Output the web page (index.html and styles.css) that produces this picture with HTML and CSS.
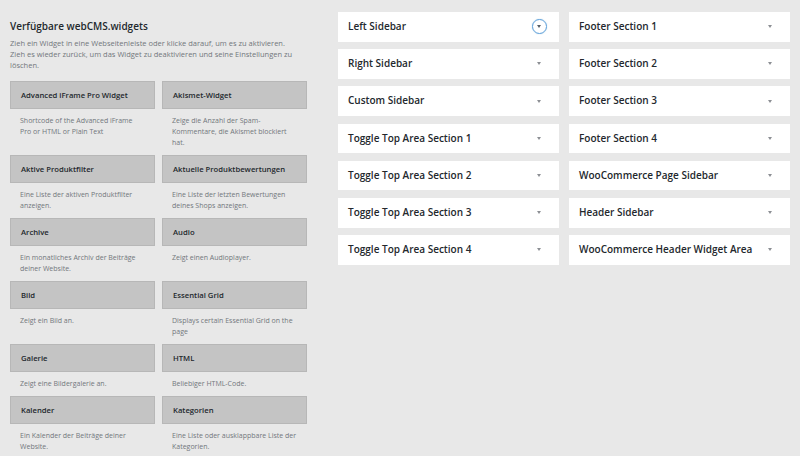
FILE: index.html
```html
<!DOCTYPE html>
<html lang="de">
<head>
    <meta charset="UTF-8">
    <meta name="viewport" content="width=device-width, initial-scale=1.0">
    <title>Widgets</title>
    <link rel="stylesheet" href="styles.css">
</head>
<body>

<div class="page">

    <div class="available">
        <h2 class="available-title">Verfügbare webCMS.widgets</h2>
        <p class="available-desc">Zieh ein Widget in eine Webseitenleiste oder klicke darauf, um es zu aktivieren.<br>Zieh es wieder zurück, um das Widget zu deaktivieren und seine Einstellungen zu löschen.</p>

        <div class="widget-list">
            <div class="widget">
                <div class="widget-top">Advanced iFrame Pro Widget</div>
                <p class="widget-desc">Shortcode of the Advanced iFrame Pro or HTML or Plain Text</p>
            </div>
            <div class="widget">
                <div class="widget-top">Akismet-Widget</div>
                <p class="widget-desc">Zeige die Anzahl der Spam-Kommentare, die Akismet blockiert hat.</p>
            </div>
            <div class="widget">
                <div class="widget-top">Aktive Produktfilter</div>
                <p class="widget-desc">Eine Liste der aktiven Produktfilter anzeigen.</p>
            </div>
            <div class="widget">
                <div class="widget-top">Aktuelle Produktbewertungen</div>
                <p class="widget-desc">Eine Liste der letzten Bewertungen deines Shops anzeigen.</p>
            </div>
            <div class="widget">
                <div class="widget-top">Archive</div>
                <p class="widget-desc">Ein monatliches Archiv der Beiträge deiner Website.</p>
            </div>
            <div class="widget">
                <div class="widget-top">Audio</div>
                <p class="widget-desc">Zeigt einen Audioplayer.</p>
            </div>
            <div class="widget">
                <div class="widget-top">Bild</div>
                <p class="widget-desc">Zeigt ein Bild an.</p>
            </div>
            <div class="widget">
                <div class="widget-top">Essential Grid</div>
                <p class="widget-desc">Displays certain Essential Grid on the page</p>
            </div>
            <div class="widget">
                <div class="widget-top">Galerie</div>
                <p class="widget-desc">Zeigt eine Bildergalerie an.</p>
            </div>
            <div class="widget">
                <div class="widget-top">HTML</div>
                <p class="widget-desc">Beliebiger HTML-Code.</p>
            </div>
            <div class="widget">
                <div class="widget-top">Kalender</div>
                <p class="widget-desc">Ein Kalender der Beiträge deiner Website.</p>
            </div>
            <div class="widget">
                <div class="widget-top">Kategorien</div>
                <p class="widget-desc">Eine Liste oder ausklappbare Liste der Kategorien.</p>
            </div>
        </div>
    </div>

    <div class="sidebars">
        <div class="sidebar-col">
            <div class="sidebar">Left Sidebar <span class="toggle focused"></span></div>
            <div class="sidebar">Right Sidebar <span class="toggle"></span></div>
            <div class="sidebar">Custom Sidebar <span class="toggle"></span></div>
            <div class="sidebar">Toggle Top Area Section 1 <span class="toggle"></span></div>
            <div class="sidebar">Toggle Top Area Section 2 <span class="toggle"></span></div>
            <div class="sidebar">Toggle Top Area Section 3 <span class="toggle"></span></div>
            <div class="sidebar">Toggle Top Area Section 4 <span class="toggle"></span></div>
        </div>
        <div class="sidebar-col">
            <div class="sidebar">Footer Section 1 <span class="toggle"></span></div>
            <div class="sidebar">Footer Section 2 <span class="toggle"></span></div>
            <div class="sidebar">Footer Section 3 <span class="toggle"></span></div>
            <div class="sidebar">Footer Section 4 <span class="toggle"></span></div>
            <div class="sidebar">WooCommerce Page Sidebar <span class="toggle"></span></div>
            <div class="sidebar">Header Sidebar <span class="toggle"></span></div>
            <div class="sidebar">WooCommerce Header Widget Area <span class="toggle"></span></div>
        </div>
    </div>

</div>

</body>
</html>
```

FILE: styles.css
```css
body {
    font-family: "Open Sans", "Noto Sans", sans-serif;
    margin: 0;
    padding: 0;
    background: #e8e8e8;
    color: #23282d;
}

.page {
    display: flex;
    align-items: flex-start;
    padding: 12px 10px 0 10px;
    gap: 31px;
}

.available {
    width: 297px;
}

.available-title {
    margin: 7px 0 0 0;
    font-size: 10px;
    font-weight: 600;
    line-height: 14px;
}

.available-desc {
    margin: 5px 0 10px 0;
    font-size: 7.5px;
    line-height: 11px;
    color: #72777c;
}

.widget-list {
    display: grid;
    grid-template-columns: 145px 145px;
    column-gap: 7px;
}

.widget-top {
    box-sizing: border-box;
    height: 28px;
    padding: 0 10px;
    background: #c4c4c4;
    border: 1px solid #b7b7b7;
    font-size: 7.7px;
    font-weight: 600;
    line-height: 26px;
}

.widget-desc {
    margin: 6px 0 7px 0;
    padding: 0 10px;
    font-size: 7px;
    line-height: 11px;
    color: #72777c;
}

.sidebars {
    display: flex;
    gap: 10px;
}

.sidebar-col {
    width: 221px;
    display: flex;
    flex-direction: column;
    gap: 7.6px;
}

.sidebar {
    height: 29.6px;
    padding: 0 10px;
    background: #fff;
    font-size: 10px;
    font-weight: 600;
    line-height: 29.6px;
    display: flex;
    justify-content: space-between;
    align-items: center;
}

.toggle {
    position: relative;
    width: 15px;
    height: 15px;
    margin-right: 2px;
    border-radius: 50%;
}

.toggle::after {
    content: "";
    position: absolute;
    left: 5px;
    top: 6px;
    border-left: 2.5px solid transparent;
    border-right: 2.5px solid transparent;
    border-top: 3px solid #8c8f94;
}

.toggle.focused {
    box-sizing: border-box;
    border: 1px solid #5b9dd9;
    box-shadow: 0 0 1px rgba(30, 140, 190, 0.5);
}

.toggle.focused::after {
    left: 4px;
    top: 5px;
    border-top-color: #555d66;
}
```
